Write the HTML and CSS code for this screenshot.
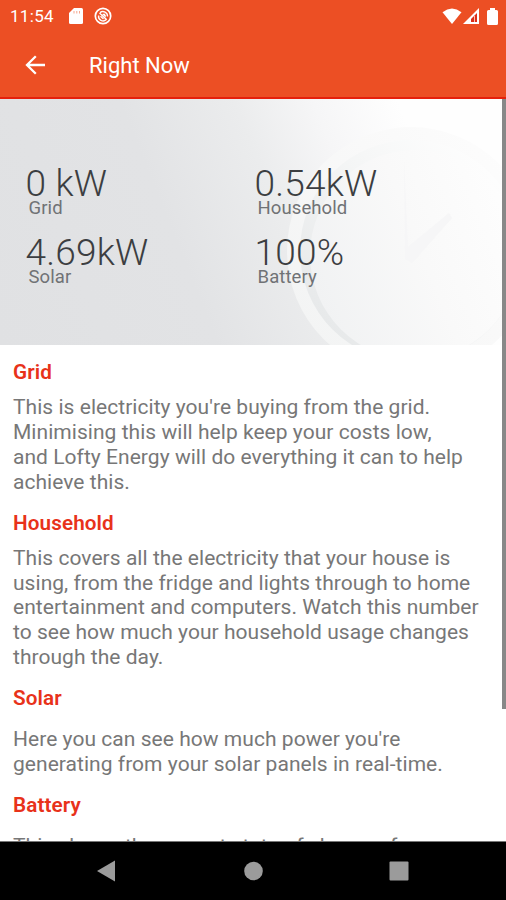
FILE: index.html
```html
<!DOCTYPE html>
<html lang="en">
<head>
<meta charset="utf-8">
<title>Right Now</title>
<link rel="stylesheet" href="styles.css">
</head>
<body>
<div class="screen">
  <header class="top">
    <div class="status">
      <span class="time">11:54</span>
      <svg class="sd" width="14" height="16" viewBox="0 0 14 16"><path fill="#fff" d="M5 0H12.500Q14 0 14 1.500V14.500Q14 16 12.500 16H1.500Q0 16 0 14.500V5Z"/><path fill="#f6a890" d="M4.500 3V5.500H5.500V3ZM7.300 3V5.500H8.300V3ZM10 3V5.500H11V3Z"/></svg>
      <svg class="sync" width="18" height="18" viewBox="0 0 18 18" fill="none" stroke="#fff"><circle cx="9" cy="9" r="7.700" stroke-width="1.700"/><path stroke-width="1.400" d="M12.300 12.600A4.600 4.600 0 0 1 4.600 8.500M6 5.600A4.600 4.600 0 0 1 13.500 9.500M5.500 6L12.800 12.800M6.500 9.300L9.500 12"/><path fill="#fff" stroke="none" d="M8 7L10.500 6.500L12 8.500L11.500 10.500Z"/></svg>
      <svg class="wifi" width="20" height="16" viewBox="0 0 20 16"><path fill="#fff" d="M.5 4.200Q10-3 19.500 4.200L10 16Z"/></svg>
      <svg class="signal" width="16" height="16" viewBox="0 0 16 16"><path fill="#fff" d="M16 0V16H0Z"/><path fill="#dd2c18" d="M14 5V14H8V11Z"/><path stroke="#f9c0ae" stroke-width="1" d="M11.500 8V14"/></svg>
      <svg class="battery" width="11" height="17" viewBox="0 0 11 17"><path fill="#fff" d="M3 0H8V2H9.500Q11 2 11 3.500V15.500Q11 17 9.500 17H1.500Q0 17 0 15.500V3.500Q0 2 1.500 2H3Z"/></svg>
    </div>
    <div class="bar">
      <svg class="back" width="20" height="20" viewBox="0 0 20 20" fill="none" stroke="#fff" stroke-width="2.300"><path d="M20 10H2M10.800 1.200L2 10L10.800 18.800"/></svg>
      <h1>Right Now</h1>
    </div>
  </header>
  <main class="content">
    <section class="hero">
      <svg class="clock" width="502" height="246" viewBox="0 0 502 246">
        <defs>
          <linearGradient id="ring" x1="0" y1=".7" x2="1" y2="0"><stop offset="0" stop-color="#f3f4f4"/><stop offset=".5" stop-color="#f9f9f9"/><stop offset="1" stop-color="#fefefe"/></linearGradient>
          <linearGradient id="shade" x1="0" y1=".7" x2=".8" y2="0"><stop offset="0" stop-color="#e7e9ea"/><stop offset=".6" stop-color="#f6f7f7"/><stop offset="1" stop-color="#fefefe"/></linearGradient>
          <linearGradient id="face" x1="0" y1=".6" x2="1" y2=".2"><stop offset="0" stop-color="#f1f2f3"/><stop offset=".5" stop-color="#f9f9f9"/><stop offset="1" stop-color="#fefefe"/></linearGradient>
        </defs>
        <circle cx="411" cy="152" r="124" fill="url(#ring)"/>
        <circle cx="411" cy="152" r="111" fill="url(#shade)"/>
        <circle cx="415" cy="156" r="105" fill="url(#face)"/>
        <path d="M404 60L408 148L449 114L452 119L412 164L405 160Z" fill="#f6f6f7"/>
      </svg>
      <div class="stats">
        <div class="stat"><div class="value">0 kW</div><div class="label">Grid</div></div>
        <div class="stat"><div class="value">0.54kW</div><div class="label">Household</div></div>
        <div class="stat"><div class="value">4.69kW</div><div class="label">Solar</div></div>
        <div class="stat"><div class="value">100%</div><div class="label">Battery</div></div>
      </div>
    </section>
    <section class="info">
      <h2>Grid</h2>
      <p>This is electricity you're buying from the grid.<br>Minimising this will help keep your costs low,<br>and Lofty Energy will do everything it can to help<br>achieve this.</p>
      <h2>Household</h2>
      <p>This covers all the electricity that your house is<br>using, from the fridge and lights through to home<br>entertainment and computers. Watch this number<br>to see how much your household usage changes<br>through the day.</p>
      <h2>Solar</h2>
      <p class="spaced">Here you can see how much power you're<br>generating from your solar panels in real-time.</p>
      <h2>Battery</h2>
      <p class="spaced">This shows the current state of charge of</p>
    </section>
    <div class="scrollbar"></div>
  </main>
  <nav class="nav">
    <svg width="506" height="58" viewBox="0 0 506 58" fill="#9b9b9b"><path d="M97 29L115 18.500V39.500Z"/><circle cx="253.500" cy="29" r="9.300"/><rect x="389.500" y="19.500" width="19" height="19" rx="1"/></svg>
  </nav>
</div>
</body>
</html>
```
FILE: styles.css
```css
* { box-sizing: border-box; }
body { margin: 0; font-family: Roboto, "Liberation Sans", sans-serif; background: #fff; }
.screen { width: 506px; height: 900px; display: flex; flex-direction: column; overflow: hidden; }
.top { height: 99px; flex: none; background: #ec4f24; border-bottom: 2px solid #e5200c; color: #fff; }
.status { height: 32px; display: flex; align-items: center; padding: 0 8px 0 10px; }
.time { font-size: 17px; line-height: 32px; letter-spacing: .3px; width: 59px; }
.sync { margin-left: 11px; }
.wifi { margin-left: auto; }
.signal { margin-left: 1px; }
.battery { margin-left: 8px; }
.bar { height: 65px; display: flex; align-items: center; padding-left: 25px; }
h1 { margin: 2px 0 0 44px; font-size: 22px; font-weight: 400; line-height: 26px; }
.content { position: relative; height: 743px; flex: none; overflow: hidden; border-bottom: 1px solid #777; }
.hero { position: relative; height: 246px; background: linear-gradient(68deg, #e0e1e3 0%, #e2e3e5 36%, #ebeced 55%, #f6f6f7 68%, #fefefe 82%); }
.clock { position: absolute; left: 0; top: 0; }
.stats { position: relative; display: grid; grid-template-columns: 229px 229px; grid-auto-rows: 69px; padding: 68px 0 0 25.500px; }
.value { font-size: 37px; line-height: 34px; letter-spacing: .2px; font-weight: 300; color: #3c3e41; white-space: pre; }
.label { font-size: 18.500px; line-height: 18px; letter-spacing: .1px; margin: -2px 0 0 3px; font-weight: 400; color: #707275; }
.info { padding: 15px 0 0 13px; }
h2 { margin: 0; font-size: 20.700px; line-height: 25px; letter-spacing: .1px; font-weight: 600; color: #e8321a; }
p { margin: 10px 0 16px; font-size: 21px; line-height: 24.900px; letter-spacing: .04px; font-weight: 400; color: #777; white-space: nowrap; }
.spaced { margin-top: 16px; }
.scrollbar { position: absolute; right: 0; top: 0; width: 4px; height: 610px; background: #888; }
.nav { height: 58px; flex: none; background: #000; }
.nav svg { display: block; }
```
